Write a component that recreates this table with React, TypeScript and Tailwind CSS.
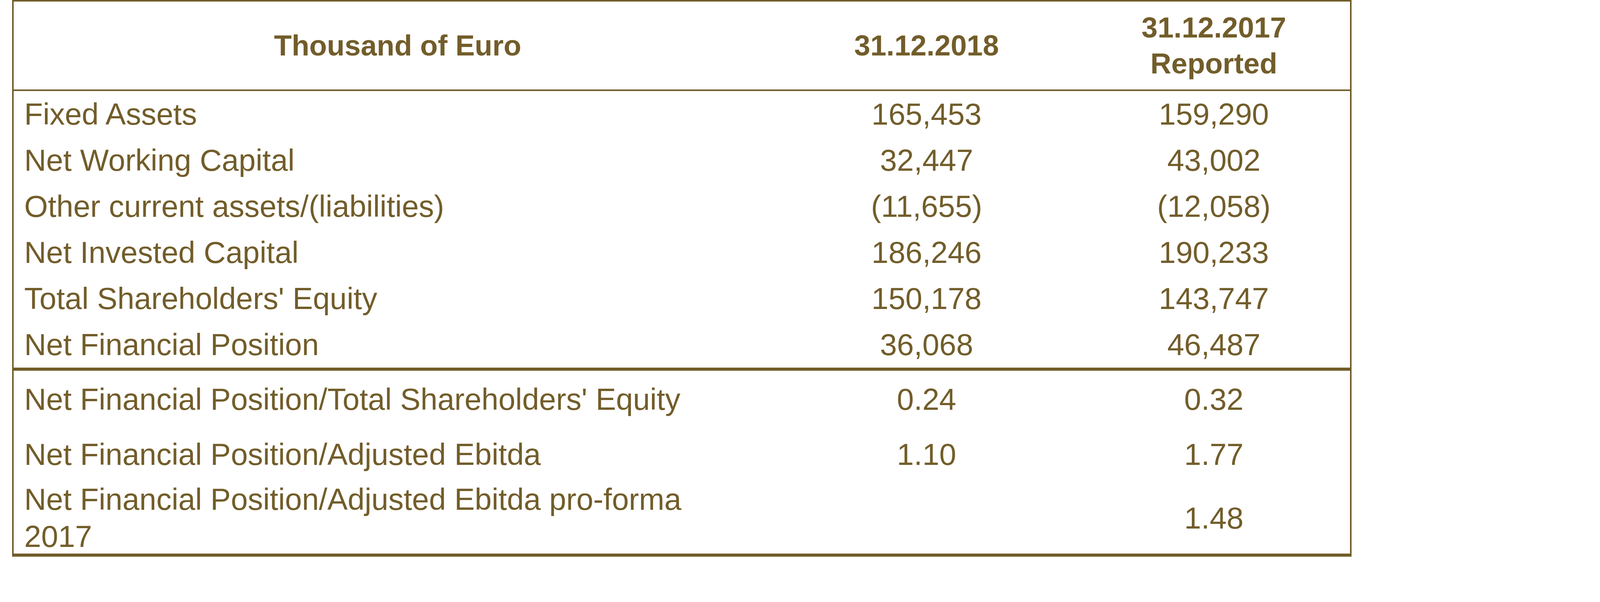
const balanceRows = [
  { label: 'Fixed Assets', current: '165,453', previous: '159,290' },
  { label: 'Net Working Capital', current: '32,447', previous: '43,002' },
  { label: 'Other current assets/(liabilities)', current: '(11,655)', previous: '(12,058)' },
  { label: 'Net Invested Capital', current: '186,246', previous: '190,233' },
  { label: "Total Shareholders' Equity", current: '150,178', previous: '143,747' },
  { label: 'Net Financial Position', current: '36,068', previous: '46,487' },
]

export default function App() {
  return (
    <div className="min-h-screen bg-white font-['Liberation_Sans',Arial,sans-serif] text-[#725d2a]">
      <div className="ml-[31px] w-[3429px] border-x-4 border-t-4 border-b-8 border-[#725d2a]">
        {/* header */}
        <div className="grid h-[229px] grid-cols-[1966px_742px_713px] items-center border-b-4 border-[#725d2a] text-[74px] font-bold leading-[92px]">
          <div className="text-center">Thousand of Euro</div>
          <div className="text-center">31.12.2018</div>
          <div className="pl-[16px] text-center">
            31.12.2017
            <br />
            Reported
          </div>
        </div>

        {/* balance sheet rows */}
        <div className="border-b-8 border-[#725d2a] text-[78px] leading-[95px]">
          {balanceRows.map(row => (
            <div
              key={row.label}
              className="grid h-[118px] grid-cols-[1966px_742px_713px] items-center"
            >
              <div className="pl-[27px]">{row.label}</div>
              <div className="text-center">{row.current}</div>
              <div className="pl-[16px] text-center">{row.previous}</div>
            </div>
          ))}
        </div>

        {/* ratios */}
        <div className="text-[78px] leading-[95px]">
          <div className="grid h-[146px] grid-cols-[1966px_742px_713px] items-center">
            <div className="pl-[27px]">Net Financial Position/Total Shareholders' Equity</div>
            <div className="text-center">0.24</div>
            <div className="pl-[16px] text-center">0.32</div>
          </div>
          <div className="grid h-[136px] grid-cols-[1966px_742px_713px] items-center">
            <div className="pl-[27px]">Net Financial Position/Adjusted Ebitda</div>
            <div className="text-center">1.10</div>
            <div className="pl-[16px] text-center">1.77</div>
          </div>
          <div className="grid h-[186px] grid-cols-[1966px_742px_713px] items-center">
            <div className="pl-[27px]">
              Net Financial Position/Adjusted Ebitda pro-forma
              <br />
              2017
            </div>
            <div className="text-center"></div>
            <div className="pl-[16px] text-center">1.48</div>
          </div>
        </div>
      </div>
    </div>
  )
}
